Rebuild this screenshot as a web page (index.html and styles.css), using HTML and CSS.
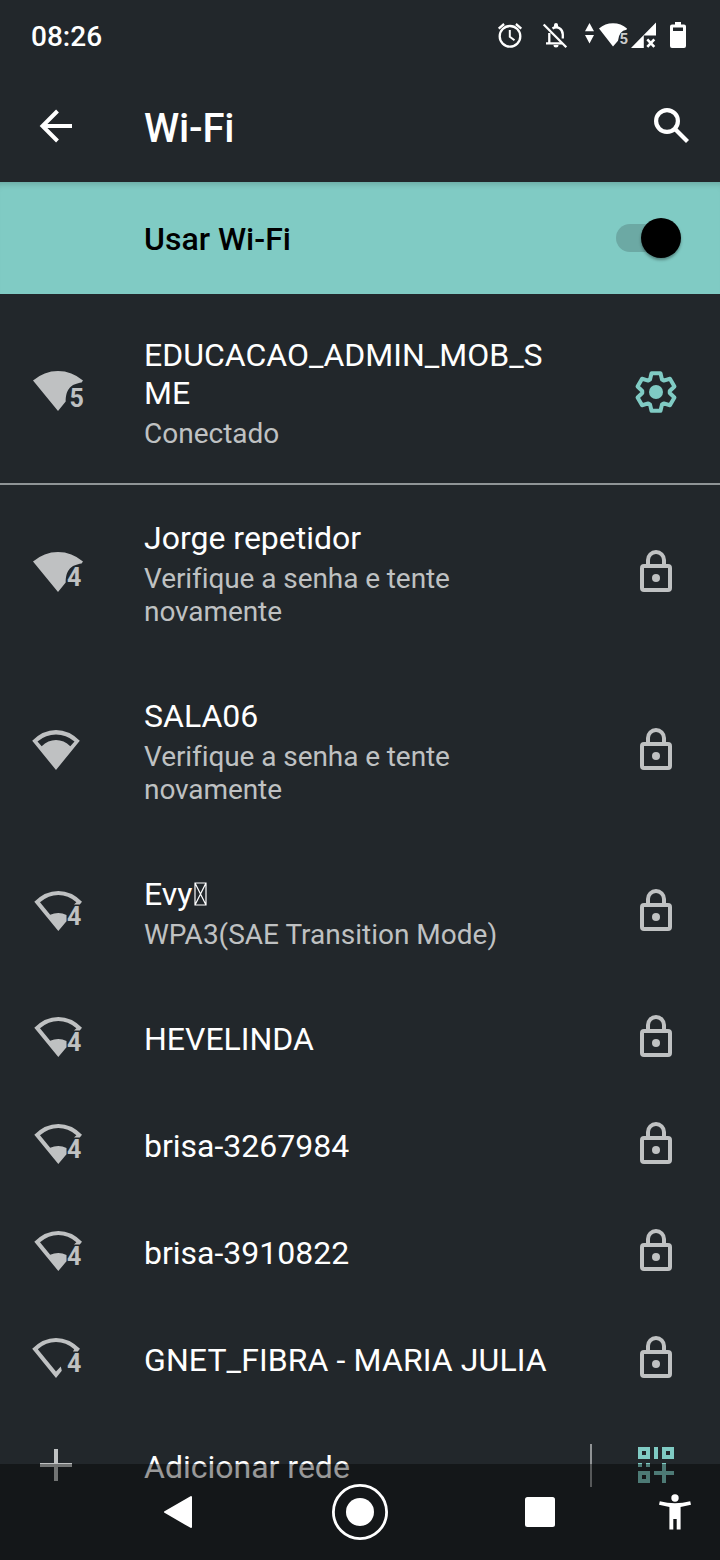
FILE: index.html
```
<!DOCTYPE html>
<html lang="pt-BR">
<head>
<meta charset="utf-8">
<title>Wi-Fi</title>
<link rel="stylesheet" href="styles.css">
</head>
<body>
<svg class="defs" aria-hidden="true">
  <symbol id="lock" viewBox="0 0 48 48">
    <rect x="10" y="18" width="28" height="24" rx="2" fill="none" stroke="currentColor" stroke-width="4"/>
    <path d="M16 17v-5a8 8 0 0 1 16 0v5" fill="none" stroke="currentColor" stroke-width="4"/>
    <circle cx="24" cy="30" r="4" fill="currentColor"/>
  </symbol>
  <symbol id="wifi-full" viewBox="0 0 56 48">
    <path d="M1 13.6Q12 4 26 4T51 13.6L49.6 15.5C40 17 33.7 21 33.7 34.6L26 44Z" fill="currentColor"/>
  </symbol>
  <symbol id="wifi-three" viewBox="0 0 56 48">
    <path fill-rule="evenodd" d="M.2 14.7Q11 4 24 4T47.8 14.7L24 44ZM5.5 15.4L9.7 20.3Q16 14.1 24 14.1T38.3 20.3L42.5 15.4Q34 8.5 24 8.5T5.5 15.4Z" fill="currentColor"/>
  </symbol>
  <symbol id="wifi-one" viewBox="0 0 56 48">
    <path fill-rule="evenodd" d="M2.3 14.8Q13 4 26.3 4T50 14.8L47.8 17.5L42 17.6L44.4 15.2Q36 8 26.3 8T8 15.3L18.2 27.7Q22 26 26.3 26T34.5 28V34.2L26.3 44Z" fill="currentColor"/>
  </symbol>
  <symbol id="wifi-zero" viewBox="0 0 56 48">
    <path d="M.2 14.8Q11 4 24 4T48 14.8L45.8 17.5L41 17.6L42.2 15.2Q34 8 24 8T5.8 15.2L24 37.6L28.8 32.6L29.8 36.8L24 44Z" fill="currentColor"/>
  </symbol>
</svg>

<div class="screen">
  <header class="status">
    <span class="clock">08:26</span>
    <svg class="status-icons" viewBox="490 12 210 48">
      <g fill="none" stroke="#fff" stroke-width="2.3">
        <circle cx="510" cy="36.3" r="10.3"/>
        <path d="M498.7 28.6l5.4-4.6M521.3 28.6l-5.4-4.6"/>
        <path d="M509.8 30v6.8l4.7 3.5" stroke-width="2"/>
        <path d="M543.7 24.5l22.6 22.8"/>
        <path d="M549.3 33v10.4M546 43.4h16M552.5 28.5q3.5-2.3 7-.3q3.3 2 3.3 6.3v4"/>
      </g>
      <g fill="#fff">
        <path d="M554 27v-2a2 2 0 0 1 4 0v2zM553.5 45h5a2.5 2.5 0 0 1-5 0z"/>
        <path d="M589.5 23l4.5 8.3h-9zM585 35h9l-4.5 8.5z"/>
        <path d="M599 28.5q6-5.3 14-5.3t14 5.3l-.5 1.3q-7.5 1-8.5 11l-5 5.7z"/>
        <path d="M656 22.5V35.6H643.8V47.9H631z"/>
        <path d="M675 22h6v2.5h3q2 0 2 2v19.500q0 2-2 2h-12q-2 0-2-2v-19.500q0-2 2-2h3zM673 27.500v3.500h10v-3.500z" fill-rule="evenodd"/>
      </g>
      <path d="M647.3 39.300l7 7.500M654.300 39.300l-7 7.500" stroke="#fff" stroke-width="2.600"/>
      <text class="status-band" x="619.6" y="44.200">5</text>
    </svg>
  </header>

  <div class="toolbar">
    <svg class="back" viewBox="32 102 48 48"><path d="M72 126H43M57.500 111L42.500 126L57.500 141" fill="none" stroke="#fff" stroke-width="4"/></svg>
    <h1 class="heading">Wi-Fi</h1>
    <svg class="search" viewBox="648 102 48 48"><g fill="none" stroke="#fff" stroke-width="4.200"><circle cx="667" cy="121" r="10.900"/><path d="M675 129l12.500 12.400"/></g></svg>
  </div>

  <div class="switch-bar">
    <span class="switch-label">Usar Wi-Fi</span>
    <span class="toggle"><i class="thumb"></i></span>
  </div>

  <main class="list">
    <div class="row connected">
      <span class="signal"><svg><use href="#wifi-full"/></svg><b class="band five">5</b></span>
      <div class="label"><p class="name">EDUCACAO_ADMIN_MOB_S<br>ME</p><p class="note">Conectado</p></div>
      <svg class="action gear" viewBox="-24 -24 48 48">
        <path d="M-4.500-18.700H4.500L6-12.400L7.740-11.400L13.940-13.250L18.440-5.450L13.740-1V1L18.440 5.450L13.940 13.250L7.740 11.400L6 12.400L4.500 18.700H-4.500L-6 12.400L-7.740 11.400L-13.940 13.250L-18.440 5.450L-13.740 1V-1L-18.440-5.450L-13.940-13.250L-7.740-11.400L-6-12.400Z" fill="none" stroke="currentColor" stroke-width="4" stroke-linejoin="round"/>
        <circle r="7" fill="currentColor"/>
      </svg>
    </div>
    <div class="row">
      <span class="signal"><svg><use href="#wifi-full"/></svg><b class="band">4</b></span>
      <div class="label"><p class="name">Jorge repetidor</p><p class="note tight">Verifique a senha e tente<br>novamente</p></div>
      <svg class="action"><use href="#lock"/></svg>
    </div>
    <div class="row">
      <span class="signal"><svg><use href="#wifi-three"/></svg></span>
      <div class="label"><p class="name">SALA06</p><p class="note tight">Verifique a senha e tente<br>novamente</p></div>
      <svg class="action"><use href="#lock"/></svg>
    </div>
    <div class="row">
      <span class="signal"><svg><use href="#wifi-one"/></svg><b class="band">4</b></span>
      <div class="label"><p class="name">Evy<svg class="tofu" viewBox="0 0 13 24"><path d="M1 1H12V23H1ZL12 23M12 1L1 23" fill="none" stroke="#fff" stroke-width="1.200"/></svg></p><p class="note">WPA3(SAE Transition Mode)</p></div>
      <svg class="action"><use href="#lock"/></svg>
    </div>
    <div class="row">
      <span class="signal"><svg><use href="#wifi-one"/></svg><b class="band">4</b></span>
      <div class="label"><p class="name">HEVELINDA</p></div>
      <svg class="action"><use href="#lock"/></svg>
    </div>
    <div class="row">
      <span class="signal"><svg><use href="#wifi-one"/></svg><b class="band">4</b></span>
      <div class="label"><p class="name">brisa-3267984</p></div>
      <svg class="action"><use href="#lock"/></svg>
    </div>
    <div class="row">
      <span class="signal"><svg><use href="#wifi-one"/></svg><b class="band">4</b></span>
      <div class="label"><p class="name">brisa-3910822</p></div>
      <svg class="action"><use href="#lock"/></svg>
    </div>
    <div class="row">
      <span class="signal"><svg><use href="#wifi-zero"/></svg><b class="band">4</b></span>
      <div class="label"><p class="name wide">GNET_FIBRA - MARIA JULIA</p></div>
      <svg class="action"><use href="#lock"/></svg>
    </div>
    <div class="row add">
      <span class="signal"><svg viewBox="0 0 56 48"><path d="M8 24H40M24 8V40" stroke="currentColor" stroke-width="4"/></svg></span>
      <div class="label"><p class="name">Adicionar rede</p></div>
      <span class="rule"></span>
      <svg class="action qr" viewBox="0 0 48 48"><path fill="currentColor" fill-rule="evenodd" d="M6 6h12v12H6zM10 10v4h4v-4zM22 6h4v12h-4zM30 6h12v12H30zM34 10v4h4v-4zM6 22h4v4H6zM14 22h4v4h-4zM6 30h12v12H6zM10 34v4h4v-4zM30 22h4v8h8v4h-8v8h-4v-8h-8v-4h8z"/></svg>
    </div>
  </main>

  <nav class="nav">
    <svg viewBox="0 1464 720 96">
      <path d="M165 1512L191 1497V1527Z" fill="#fff" stroke="#fff" stroke-width="2" stroke-linejoin="round"/>
      <circle cx="360" cy="1512" r="26.600" fill="none" stroke="#fff" stroke-width="2.800"/>
      <circle cx="360" cy="1512" r="14" fill="#fff"/>
      <rect x="525" y="1497" width="30" height="30" rx="2.500" fill="#fff"/>
      <circle cx="675" cy="1498" r="3.700" fill="#fff"/>
      <path d="M659.800 1501.300Q675 1505 690.200 1501.300L691 1504.800L680.600 1507V1529.500H676.700V1519H673.300V1529.500H669.400V1507L659 1504.800Z" fill="#fff"/>
    </svg>
  </nav>
</div>
</body>
</html>
```
FILE: styles.css
```
body, p, h1 { margin: 0; }
body { background: #22272b; }
.defs { position: absolute; width: 0; height: 0; }

.screen {
  position: relative;
  width: 720px;
  height: 1560px;
  overflow: hidden;
  background: #22272b;
  color: #fff;
  font-family: Roboto, sans-serif;
}

.status {
  display: flex;
  justify-content: space-between;
  height: 72px;
  box-sizing: border-box;
  padding: 12px 20px 0 31px;
}
.clock { font-size: 28px; font-weight: 500; line-height: 50px; }
.status-icons { width: 210px; height: 48px; }
.status-band { font: 700 15px Roboto, sans-serif; fill: #ccc; }

.toolbar {
  display: flex;
  align-items: center;
  height: 110px;
  box-sizing: border-box;
  padding: 0 24px 2px 32px;
}
.back, .search { width: 48px; height: 48px; }
.back { margin-right: 64px; }
.heading { flex: 1; padding-top: 6px; font-size: 40px; font-weight: 500; line-height: 48px; letter-spacing: -.2px; }

.switch-bar {
  display: flex;
  align-items: center;
  justify-content: space-between;
  height: 112px;
  box-sizing: border-box;
  padding: 0 40px 0 144px;
  background: #80cbc4;
  box-shadow: inset 0 7px 6px -5px rgba(0, 0, 0, .18);
  color: #000;
  font-size: 32px;
  font-weight: 500;
}
.switch-label { padding-top: 2px; }
.toggle {
  display: flex;
  align-items: center;
  justify-content: flex-end;
  width: 64px;
  height: 28px;
  border-radius: 14px;
  background: #6ca9a4;
}
.thumb {
  flex: none;
  width: 40px;
  height: 40px;
  margin-right: -1px;
  border-radius: 50%;
  background: #000;
  box-shadow: 0 2px 3px rgba(0, 0, 0, .35);
}

.row {
  display: flex;
  align-items: center;
  padding: 0 40px 0 32px;
  color: #bfc1c2;
}
.connected {
  padding-top: 7px;
  box-shadow: inset 0 -1px #909597, 0 1px #909597;
}
.signal {
  position: relative;
  width: 112px;
  height: 48px;
  margin-bottom: 3px;
}
.signal svg { display: block; width: 56px; height: 48px; }
.band {
  position: absolute;
  left: 35px;
  top: 14px;
  font-size: 25px;
  font-weight: 700;
  line-height: 32px;
}
.five { left: 37.5px; top: 16px; }
.label { flex: 1; padding: 35px 0 34px; }
.name { color: #fff; font-size: 32px; line-height: 38px; }
.wide { letter-spacing: .1px; }
.note { margin-top: 5px; font-size: 28px; line-height: 33px; }
.tight { letter-spacing: -.08px; }
.action { width: 48px; height: 48px; margin-bottom: 3px; }
.gear { margin-bottom: 1px; color: #80cbc4; }
.qr { color: #80cbc4; }
.tofu { width: 13px; height: 24px; margin-left: 1.5px; vertical-align: -1px; }
.rule { width: 2px; height: 43px; margin: 0 40px 3px 0; background: #909395; }

.nav {
  position: absolute;
  left: 0;
  bottom: 0;
  width: 720px;
  height: 96px;
  background: rgba(0, 0, 0, .4);
}
.nav svg { display: block; width: 720px; height: 96px; }
```
